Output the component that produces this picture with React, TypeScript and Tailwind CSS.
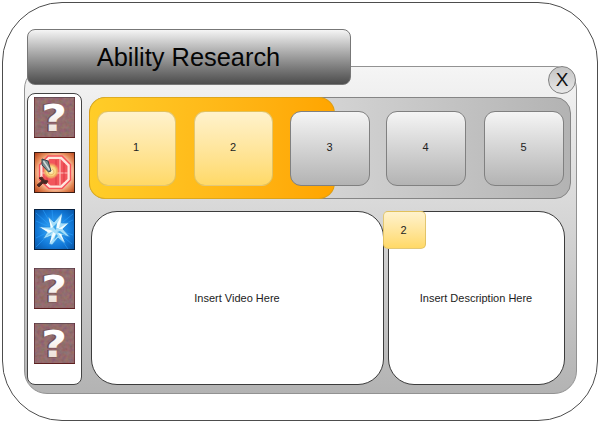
import React from "react";

function UnknownIcon({ seed }: { seed: number }) {
  const id = "grain" + seed;
  return (
    <svg width="41" height="41" viewBox="0 0 41 41" className="block shrink-0 overflow-visible">
      <defs>
        <filter id={id} x="0" y="0" width="1" height="1">
          <feTurbulence type="fractalNoise" baseFrequency="0.28" numOctaves="2" seed={seed} />
          <feColorMatrix values="1 0 0 0 0  0 1 0 0 0  0 0 1 0 0  0 0 0 0 0.22" />
        </filter>
        <linearGradient id={id + "m"} x1="0" y1="0" x2="0" y2="1">
          <stop offset="0.3" stopColor="#ffffff" />
          <stop offset="1" stopColor="#e6d5c9" />
        </linearGradient>
      </defs>
      <rect width="41" height="41" fill="#875557" />
      <rect width="41" height="41" filter={`url(#${id})`} />
      <path d="M0 .5H41" stroke="#55404a" strokeOpacity=".7" />
      <path d="M.5 0V41M40.5 0V41" stroke="#633038" strokeOpacity=".8" />
      <path d="M0 40.5H41" stroke="#5e2020" />
      <g fontSize="37" fontWeight="700" textAnchor="middle" className="font-['DejaVu_Sans',sans-serif]">
        <text transform="translate(19.200 34.300) scale(1.200 1)" fill="#4d3038" opacity=".45" stroke="#4d3038" strokeWidth="1.200">?</text>
        <text transform="translate(20 34) scale(1.200 1)" fill={`url(#${id}m)`}>?</text>
      </g>
    </svg>
  );
}

function ShieldIcon() {
  return (
    <svg width="41" height="41" viewBox="0 0 41 41" className="block shrink-0">
      <defs>
        <radialGradient id="ember" cx=".52" cy=".5" r=".7">
          <stop offset=".5" stopColor="#ffe0c8" />
          <stop offset=".72" stopColor="#e58a58" />
          <stop offset="1" stopColor="#b03a12" />
        </radialGradient>
        <radialGradient id="flare">
          <stop offset="0" stopColor="#fff7cc" />
          <stop offset=".6" stopColor="#fad27a" />
          <stop offset="1" stopColor="#f7b060" stopOpacity=".2" />
        </radialGradient>
      </defs>
      <rect width="41" height="41" fill="url(#ember)" />
      <path d="M14 4H28L36.500 12.500V28L28 36.500H15L5.500 28V13Z" fill="#ffe6de" stroke="#f7535a" strokeWidth="1.500" />
      <path d="M15.500 7H26.500L33.500 14V27L26.500 33.500H16.500L8.500 27V14Z" fill="#f2565c" />
      <path d="M26 7V33.500M8 21H34" stroke="#ffc4bd" strokeWidth="1.200" />
      <path d="M22 8V33M30 11V30M13 10V30" stroke="#d43340" strokeOpacity=".6" strokeWidth="1.200" />
      <circle cx="17" cy="19" r="8" fill="url(#flare)" />
      <path d="M11 19A6 6 0 1 0 19 13.500M14 20A3 3 0 1 0 18 17" fill="none" stroke="#ecb765" strokeWidth="1" />
      <path d="M8 7L14 9L17 19L14.500 20L8 13Z" fill="#7d8b8e" stroke="#36434a" strokeWidth="1" />
      <path d="M9.500 9L15.500 18" stroke="#d4dcdb" strokeWidth="1.400" />
      <path d="M3 33L8 29L5 26L8 25L10 28L14 29L12 32L9 31L5 35Z" fill="#472925" stroke="#5a2b22" />
      <rect x=".5" y=".5" width="40" height="40" fill="none" stroke="#3a1b13" />
    </svg>
  );
}

function CrystalIcon() {
  return (
    <svg width="41" height="41" viewBox="0 0 41 41" className="block shrink-0">
      <defs>
        <radialGradient id="frost" cx=".5" cy=".5" r=".7">
          <stop offset="0" stopColor="#3fb2ff" />
          <stop offset=".6" stopColor="#1279d8" />
          <stop offset="1" stopColor="#07509f" />
        </radialGradient>
      </defs>
      <rect width="41" height="41" fill="url(#frost)" />
      <path d="M20 20L2 4M20 20L2 12M20 20L9 1M20 20L39 11M20 20L39 5M20 20L2 29M20 20L2 38M20 20L38 35M20 20L34 40M20 20L39 26M20 20L18 1" stroke="#2ba3ff" strokeOpacity=".55" />
      <path d="M16 18L14.500 8L20 13L28 4L27.500 14L35 14L29 20L36 28L28 26L31 35L24 29L18 36L15.500 35L17 27L9 30L13 23L5 18Z" fill="#a4defa" stroke="#2488da" strokeWidth=".8" />
      <path d="M21 19L28 5L25 19ZM19 18L14.500 8L17 19ZM19 22L6 18L15 24ZM19 23L15.500 35L22 25ZM24 20L34 14L28 20ZM24 24L31 34L27 25Z" fill="#f4fdff" />
      <path d="M19 18L23 14L22 21ZM18 23L11 28L16 25ZM23 23L33 27L26 22ZM22 25L20 31L24 27Z" fill="#3ba6e8" />
      <rect x=".5" y=".5" width="40" height="40" fill="none" stroke="#08213f" />
    </svg>
  );
}

const tiles = [
  { n: "1", ready: true, size: "w-[79px]" },
  { n: "2", ready: true, size: "ml-[18px] w-[79px]" },
  { n: "3", ready: false, size: "ml-[17px] w-[80px]" },
  { n: "4", ready: false, size: "ml-[16px] w-[80px]" },
  { n: "5", ready: false, size: "ml-[18px] w-[80px]" },
];

const gold = "border-[#d6b656]/70 bg-linear-to-b from-[#fff2cc] to-[#ffd966]";
const silver = "border-[#808080] bg-linear-to-b from-[#f5f5f5] to-[#b3b3b3]";

export default function App() {
  return (
    <div className="h-[423px] w-[600px] bg-white pt-[2px] pl-[2px] font-['Liberation_Sans',Arial,sans-serif] text-[#222]">
      <main className="relative h-[419px] w-[596px] rounded-[60px] border border-[#4d4d4d] bg-white pt-[63px] pl-[21px]">
        <h1 className="absolute top-[26px] left-[24px] z-10 flex h-[56px] w-[324px] items-center justify-center rounded-lg border border-[#777] bg-linear-to-b from-[#f5f5f5] to-[#4d4d4d] pt-px pr-px text-[25.4px] text-[#050505]">
          Ability Research
        </h1>
        <button className="absolute top-[63px] left-[545px] z-10 flex h-[28px] w-[28px] items-center justify-center rounded-full border border-[#808080] bg-linear-to-b from-[#c4c4c4] to-[#e8e8e8] pt-px text-[19px] text-[#111]">
          X
        </button>

        <section className="flex h-[328px] w-[553px] rounded-[23px] border border-[#929292] bg-linear-to-b from-[#f5f5f5] to-[#b3b3b3] pt-[26px] pl-[2px]">
          <aside className="flex h-[292px] w-[55px] flex-col items-start rounded-lg border border-[#444] bg-white pt-[3px] pl-[6px]">
            <UnknownIcon seed={3} />
            <div className="mt-[14px]"><ShieldIcon /></div>
            <div className="mt-[16px]"><CrystalIcon /></div>
            <div className="mt-[18px]"><UnknownIcon seed={7} /></div>
            <div className="mt-[14px]"><UnknownIcon seed={12} /></div>
          </aside>

          <div className="ml-[7px] pt-[4px]">
            <div className="grid h-[102px] w-[482px] rounded-[16px] border border-[#858585] bg-linear-to-r from-[#f5f5f5] to-[#b3b3b3]">
              <div className="col-start-1 row-start-1 -mt-px -ml-px h-[102px] w-[246px] rounded-[16px] border border-[#c79a20]/60 bg-linear-to-r from-[#ffcd28] to-[#ffa500]" />
              <div className="col-start-1 row-start-1 flex pt-[13px] pl-[7px]">
                {tiles.map((t) => (
                  <div
                    key={t.n}
                    className={`flex h-[75px] items-center justify-center rounded-[11px] border pr-px pb-[2px] text-[11px] ${t.size} ${t.ready ? gold : silver}`}
                  >
                    {t.n}
                  </div>
                ))}
              </div>
            </div>

            <div className="mt-[12px] ml-[2px] flex gap-[4px] text-[11px]">
              <div className="flex h-[174px] w-[293px] items-center justify-center rounded-[26px] border border-[#3c3c3c] bg-white pr-px">
                Insert Video Here
              </div>
              <div className="relative flex h-[174px] w-[177px] items-center justify-center rounded-[26px] border border-[#3c3c3c] bg-white pr-px">
                Insert Description Here
                <span className={`absolute -top-px -left-[6px] flex h-[38px] w-[43px] items-center justify-center rounded-[5px] border pr-[2px] ${gold}`}>
                  2
                </span>
              </div>
            </div>
          </div>
        </section>
      </main>
    </div>
  );
}
